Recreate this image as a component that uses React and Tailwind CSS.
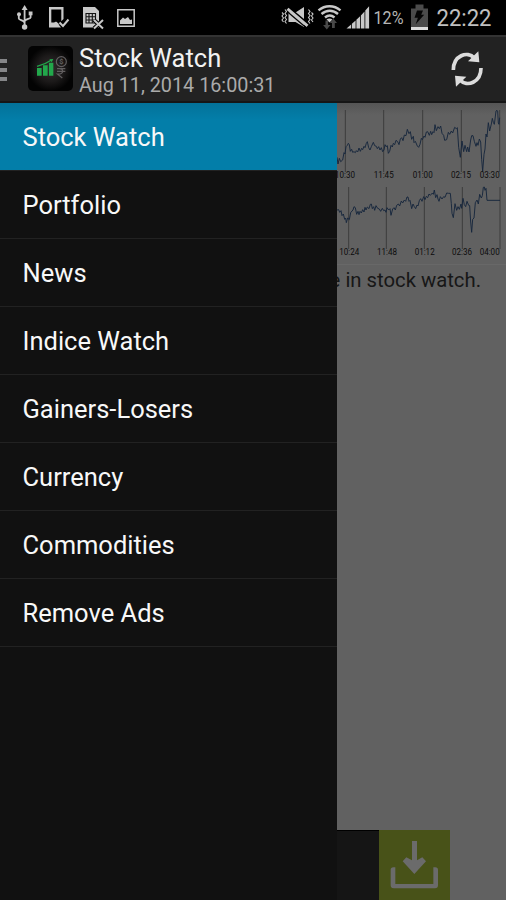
import React from 'react';
import clsx from 'clsx';

const MENU_ITEMS = [
  'Stock Watch',
  'Portfolio',
  'News',
  'Indice Watch',
  'Gainers-Losers',
  'Currency',
  'Commodities',
  'Remove Ads',
];

const NSE = {
  viewBox: '21 9 507 237',
  top: 30,
  bottom: 216,
  labelY: 234,
  grid: [46, 161, 278, 394, 509],
  labels: [
    ['10:30', 45],
    ['11:45', 161],
    ['01:00', 278],
    ['02:15', 393],
    ['03:30', 479],
  ],
  points:
    '21,172 24,192 28,175 32,185 38,180 42,158 45,162 48,140 52,136 55,130 58,134 61,154 65,148 68,157 72,155 76,158 79,152 83,156 87,144 91,154 95,145 98,149 102,139 105,143 109,130 112,125 116,143 120,150 124,140 130,127 134,137 139,139 142,146 146,140 150,150 154,143 158,155 162,150 165,134 168,140 172,137 175,160 179,154 183,136 187,141 190,130 194,134 198,121 203,125 207,134 211,117 215,113 219,122 223,105 228,107 232,88 237,101 241,95 245,118 250,109 252,128 256,124 262,138 266,142 270,133 274,115 277,119 282,108 285,112 289,96 293,95 298,106 302,94 305,104 309,95 312,98 315,74 319,92 324,80 328,86 332,78 336,100 341,106 344,121 350,119 355,97 359,103 364,93 368,99 374,82 379,86 382,83 386,142 391,172 396,123 401,155 405,136 410,155 413,141 417,156 422,120 425,107 429,107 433,124 438,139 441,128 444,136 448,117 452,126 455,178 458,214 462,163 465,147 468,102 471,111 475,68 479,93 484,72 487,55 490,67 493,73 498,33 501,31 503,33 505,69 507,73 509,53',
};

const BSE = {
  viewBox: '21 0 507 246',
  top: 15,
  bottom: 201,
  labelY: 219,
  grid: [56, 169, 283, 397, 510],
  labels: [
    ['10:24', 58],
    ['11:48', 171],
    ['01:12', 284],
    ['02:36', 396],
    ['04:00', 479],
  ],
  points:
    '21,84 26,83 29,91 33,86 36,101 40,96 44,112 47,108 49,122 53,108 58,113 62,92 66,87 69,84 72,74 76,77 80,97 84,88 87,98 90,88 94,93 98,83 102,90 105,76 108,84 112,75 117,80 121,67 124,66 127,80 131,74 134,85 138,71 143,79 148,81 152,88 157,79 161,86 165,84 168,91 171,77 176,84 180,80 183,100 188,81 192,77 196,84 200,70 205,66 209,72 214,57 218,63 223,54 227,58 231,45 234,45 237,58 240,55 245,80 249,66 253,74 257,80 261,69 264,72 268,56 272,50 276,58 281,44 285,53 289,43 293,47 297,36 301,40 307,33 310,37 313,24 317,47 321,38 324,51 327,58 331,44 336,51 341,44 345,46 350,33 356,34 361,34 364,65 366,94 370,107 375,65 380,85 384,74 388,82 393,66 395,79 399,49 403,68 407,74 411,58 416,70 419,71 422,120 425,151 428,112 432,108 436,62 441,54 445,66 449,37 454,48 457,41 460,16 463,15 465,25 468,19 471,55 510,55',
};

function PriceChart({ chart, className }) {
  return (
    <svg viewBox={chart.viewBox} className={clsx('block w-full shrink-0', className)}>
      {chart.grid.map((x) => (
        <line
          key={x}
          x1={x}
          x2={x}
          y1={chart.top}
          y2={chart.bottom}
          stroke="#3d3d3d"
          strokeWidth="3"
        />
      ))}
      <polyline
        points={chart.points}
        fill="none"
        stroke="#16263c"
        strokeWidth="2.8"
        strokeLinejoin="round"
      />
      {chart.labels.map(([text, x]) => (
        <text
          key={text}
          x={x}
          y={chart.labelY}
          textAnchor="middle"
          textLength="60"
          lengthAdjust="spacingAndGlyphs"
          fontSize="25"
          fill="#0c0c0c"
        >
          {text}
        </text>
      ))}
    </svg>
  );
}

function StatusBar() {
  return (
    <div className="h-[35px] shrink-0 bg-black">
      <svg viewBox="0 0 506 35" className="block h-[35px] w-[506px]">
        {/* usb */}
        <g fill="none" stroke="#c8c8c8" strokeWidth="1.8">
          <path d="M24.6 8v18M18.8 15v3.5c0 1.5 5.8 2 5.8 4.5M30.6 14v3.5c0 1.5-6 1.5-6 4" />
        </g>
        <g fill="#c8c8c8">
          <path d="M24.6 5l3 5h-6z" />
          <circle cx="24.6" cy="27" r="2.7" />
          <circle cx="19" cy="14.2" r="2" />
          <path d="M28.7 11.5h3.800v3.800h-3.800z" />
        </g>
        {/* phone */}
        <path d="M49 7h14.500v12l-2.200 2.200V9.500H51.300V22.500H57l4 5H49z" fill="#c8c8c8" />
        <path d="M51 25l5-3.500 3.500 3z" fill="#c8c8c8" />
        <path d="M59.500 22.500l3.500 3.500 5.500-6.500" fill="none" stroke="#c8c8c8" strokeWidth="2" />
        {/* sim card */}
        <path d="M83 7h12l4 4v16.500H83z" fill="#c8c8c8" />
        <path
          d="M86 13.500h9.500v9.500H86zM89 13.500v9.500M92.300 13.500v9.500M86 16.700h9.500M86 20h9.500"
          fill="none"
          stroke="#111"
          strokeWidth="1.1"
        />
        <path d="M94 20l9 8.500M103 20l-9 8.500" stroke="#000" strokeWidth="4" />
        <path d="M94 20l9 8.500M103 20l-9 8.500" stroke="#c8c8c8" strokeWidth="2" />
        {/* picture */}
        <path d="M117.800 9.800h16.400v16.400h-16.400z" fill="none" stroke="#c8c8c8" strokeWidth="1.5" />
        <path d="M120 24v-3.500l3-3 2 1.500 3-2 2 3 2-.5V24z" fill="#c8c8c8" />
        {/* muted speaker with vibration marks */}
        <path d="M288.500 12.500h7l8.500-5.500v20L295.500 22h-7z" fill="#c8c8c8" />
        <path d="M287.500 6.500l21 17.500" stroke="#000" strokeWidth="2" />
        <path d="M287.500 8.800l20 17" stroke="#c8c8c8" strokeWidth="3" />
        <path d="M286.500 11l20 17" stroke="#000" strokeWidth="1.2" />
        <path
          d="M282 12.500l1.500 1.500-1.500 2 1.500 2-1.500 2 1.500 2M285 9.500l1.500 2-1.500 2 1.500 2-1.500 2 1.500 2-1.500 2 1.500 2M308.500 9.500l1.500 2-1.500 2 1.500 2-1.500 2 1.500 2-1.500 2 1.500 2M311.500 12.500l1.500 1.500-1.500 2 1.500 2-1.500 2 1.500 2"
          fill="none"
          stroke="#c8c8c8"
          strokeWidth="1.1"
        />
        {/* wifi */}
        <g fill="none" stroke="#c8c8c8" strokeWidth="2.4">
          <path d="M318.500 10.300c6.500-5.500 15.500-5.500 22 0" />
          <path d="M321.500 14c5-4.300 11.500-4.300 16.500 0" />
          <path d="M325 17.500c3-2.600 6.500-2.600 9.500 0" />
        </g>
        <path d="M326.500 19.500q3-2 6 0l-3 3z" fill="#c8c8c8" />
        <g fill="#484848">
          <path d="M325.500 20.500h2.600v4.500h2.400l-3.700 4.500-3.700-4.500h2.400z" />
          <path d="M332 28v-5h-2.200l3.600-4.300 3.600 4.300h-2.200v5z" />
        </g>
        {/* signal bars */}
        <g fill="#c8c8c8">
          <path d="M346.500 28.500l4.600-4v4zM351.900 23.800l3.700-3.300v8h-3.700zM356.400 19.800l3.700-3.500v12.200h-3.700zM360.900 15.500l3.600-4v17h-3.600zM365.300 10.500l3.800-4.300v22.300h-3.800z" />
        </g>
        <text
          x="373.5"
          y="24"
          fontSize="17.6"
          textLength="30"
          lengthAdjust="spacingAndGlyphs"
          fill="#b5b5b5"
        >
          12%
        </text>
        {/* battery */}
        <path d="M415.500 4.500h8v4h4.500v19h-17v-19h4.500z" fill="#4b4b4b" />
        <path d="M411 27h17v3h-17z" fill="#dcdcdc" />
        <path d="M417 10.500h6l-1.800 4.200h3l-8.500 9.500 2.200-6.500H414.500z" fill="#050505" />
        <text
          x="436.5"
          y="25.6"
          fontSize="24.5"
          textLength="55"
          lengthAdjust="spacingAndGlyphs"
          fill="#c0c0c0"
        >
          22:22
        </text>
      </svg>
    </div>
  );
}

function AppLogo() {
  return (
    <svg viewBox="84 36 135 135" className="h-[45px] w-[45px]">
      <defs>
        <radialGradient id="logo-glow">
          <stop offset="0" stopColor="#332f30" />
          <stop offset="0.6" stopColor="#1b1919" />
          <stop offset="1" stopColor="#030303" />
        </radialGradient>
      </defs>
      <rect x="84" y="36" width="135" height="135" rx="15" fill="url(#logo-glow)" />
      <path d="M111 102h14v23h-14zM129 94h14v31h-14zM147 86h13v39h-13z" fill="#22a84b" />
      <path d="M111 97q24-5 42-18" fill="none" stroke="#22a84b" strokeWidth="3.5" />
      <path d="M148 76l12-1-5 10z" fill="#22a84b" />
      <circle cx="184" cy="83" r="15" fill="none" stroke="#625f60" strokeWidth="3.5" />
      <text x="184" y="91" textAnchor="middle" fontSize="22" fontWeight="700" fill="#625f60">
        $
      </text>
      <path
        d="M171 104h25M171 112h25M175 104c18-2 18 17-3 16l15 12"
        fill="none"
        stroke="#625f60"
        strokeWidth="3.5"
      />
    </svg>
  );
}

function ActionBar() {
  return (
    <header className="flex h-[68px] shrink-0 items-start border-t-2 border-b-2 border-t-[#333] border-b-[#161616] bg-[#222]">
      <div className="mt-[22px] flex w-[7px] flex-col gap-[5px]">
        <span className="h-1 bg-[#858688]" />
        <span className="h-1 bg-[#858688]" />
        <span className="h-1 bg-[#858688]" />
      </div>
      <div className="mt-[9px] ml-[21px]">
        <AppLogo />
      </div>
      <div className="mt-1.5 ml-1.5 grow">
        <h1 className="h-[31px] text-[25.5px] leading-[30px] text-[#f2f2f2]">Stock Watch</h1>
        <p className="text-[19.8px] leading-[23px] text-[#aaa]">Aug 11, 2014 16:00:31</p>
      </div>
      <button type="button" aria-label="Refresh" className="mt-[13px] mr-[22px]">
        <svg viewBox="60 48 102 114" className="h-[38px] w-[34px]">
          <path d="M70 108C70 65 112 49 133 72" fill="none" stroke="#dcdcdc" strokeWidth="11" />
          <path d="M145 52l3 33-34-3z" fill="#dcdcdc" />
          <path d="M153 102C153 145 111 161 90 138" fill="none" stroke="#dcdcdc" strokeWidth="11" />
          <path d="M78 158l-3-33 34 3z" fill="#dcdcdc" />
        </svg>
      </button>
    </header>
  );
}

function Drawer() {
  return (
    <nav className="w-[337px] shrink-0 bg-[#111]">
      <ul>
        {MENU_ITEMS.map((item, i) => (
          <li
            key={item}
            className={clsx(
              'flex h-[68px] items-center border-b border-[#222] pl-[22.5px] text-[25.5px] text-[#f8f8f8]',
              i === 0 && 'bg-[#037ea9] bg-linear-to-b from-[#037299] to-[#037ea9] to-25%'
            )}
          >
            <span className="pt-px">{item}</span>
          </li>
        ))}
      </ul>
    </nav>
  );
}

export default function App() {
  return (
    <div className="flex h-[900px] w-[506px] flex-col overflow-hidden bg-black font-[Roboto,sans-serif]">
      <StatusBar />
      <ActionBar />
      <div className="flex min-h-0 grow">
        <Drawer />
        <main className="flex min-w-0 grow flex-col bg-[#616161]">
          <PriceChart
            chart={NSE}
            className="h-[79px] bg-linear-to-b from-[#555] to-[#616161] to-15%"
          />
          <PriceChart chart={BSE} className="h-[82px]" />
          <div className="flex h-[35px] shrink-0 justify-end overflow-hidden border-t border-[#686868] pr-[25px]">
            <p className="text-[20.3px] leading-[30px] whitespace-nowrap text-[#171717]">
              e in stock watch.
            </p>
          </div>
          <div className="grow" />
          <div className="flex h-[70px] shrink-0">
            <div className="w-[42px] border-t border-black bg-[#151515]" />
            <div className="h-[70px] w-[71px] bg-[#485218]">
              <svg viewBox="177 45 213 210" className="h-[70px] w-[71px]">
                <path d="M276 78h15v58l16-9 11 12-35 38-35-38 11-12 17 9z" fill="#6b6b6b" />
                <path
                  d="M226 157h-6q-8 0-8 8v46q0 9 9 9h124q9 0 9-9v-46q0-8-8-8h-6v50H226z"
                  fill="#6b6b6b"
                />
              </svg>
            </div>
          </div>
        </main>
      </div>
    </div>
  );
}
